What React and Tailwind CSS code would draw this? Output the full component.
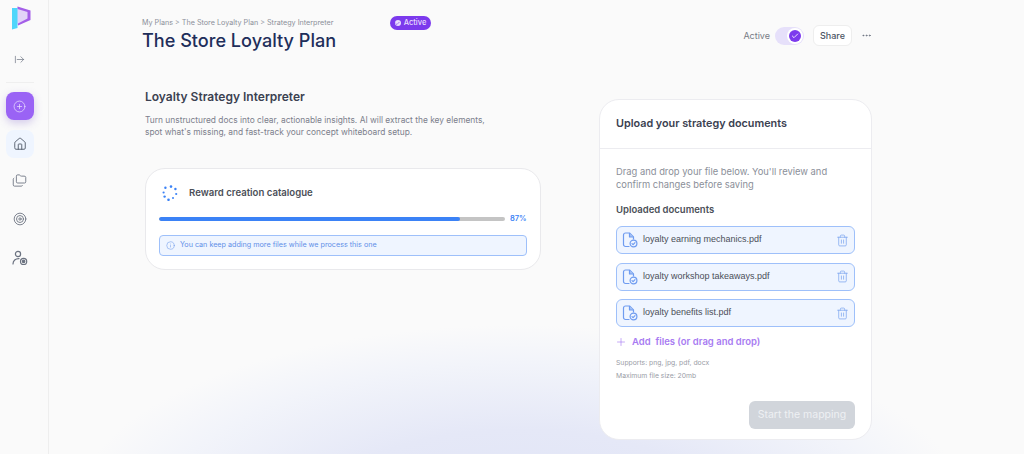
import React from "react";
import { ArrowRightFromLine, CirclePlus, House, Folders, Target, Check, Ellipsis, Info, Plus, Trash2 } from "lucide-react";

const files = ["loyalty earning mechanics.pdf", "loyalty workshop takeaways.pdf", "loyalty benefits list.pdf"];

function Logo() {
  return (
    <svg width="20" height="24" viewBox="0 0 20 24" fill="none">
      <path d="M5 1.5 L18 5 V13.5 L5 19 Z" fill="#e2d3f8" />
      <path d="M5.5 0.5 L18.5 4.5 V14 L6 19.5 V17.5 L15.5 12.5 V6 L5.5 3 Z" fill="#a45ee8" />
      <path d="M0 2 H5.5 V22 L0 23.5 Z" fill="#4fd6fb" />
    </svg>
  );
}

function UserTarget() {
  return (
    <svg width="16" height="16" viewBox="0 0 16 16" fill="none" stroke="#6b7280" strokeWidth="1.2">
      <circle cx="6" cy="4" r="2.6" />
      <path d="M1 14 C1 10.5 3.5 8.5 7 8.6" strokeLinecap="round" />
      <circle cx="11.6" cy="11.4" r="3.1" />
      <circle cx="11.6" cy="11.4" r="1.2" fill="#6b7280" />
    </svg>
  );
}

function FileIcon() {
  return (
    <svg width="16" height="16" viewBox="0 0 16 16" fill="none" stroke="#6f9cf0" strokeWidth="1.2" className="shrink-0">
      <path d="M7 14.5 H3.5 C2.4 14.5 1.5 13.6 1.5 12.5 V3 C1.5 1.9 2.4 1 3.5 1 H7.5 L11.5 5 V7" strokeLinecap="round" strokeLinejoin="round" />
      <path d="M7.5 1 V5 H11.5" fill="#a9c4f5" strokeLinejoin="round" />
      <circle cx="11.5" cy="11.5" r="3.4" />
      <path d="M10 11.6 L11.1 12.7 L13 10.6" strokeLinecap="round" strokeLinejoin="round" />
    </svg>
  );
}

function Spinner() {
  const dots = [[9, 1.6, 1.3], [13.4, 4, 1.2], [14.2, 9, 1.1], [11, 13, 1], [6.5, 14.8, 1.3], [2.6, 11.6, 1.2], [1.6, 7.5, 1.1], [3.4, 2.8, 1.2]];
  return (
    <svg width="16" height="16" viewBox="0 0 16 16" className="shrink-0">
      {dots.map(([cx, cy, r]) => (
        <circle key={cx} cx={cx} cy={cy} r={r} fill="#3b82f6" />
      ))}
    </svg>
  );
}

export default function App() {
  return (
    <div className="flex h-[454px] w-[1024px] overflow-hidden bg-[#fafafa] font-['Inter',sans-serif] text-[#374151]">
      {/* sidebar */}
      <aside className="flex w-[49px] shrink-0 flex-col items-center border-r border-[#eeeeee] pt-[6px] pr-[9px]">
        <div className="ml-[5px]"><Logo /></div>
        <ArrowRightFromLine size={11} strokeWidth={1.5} className="mt-[24px] text-[#6b7280]" />
        <div className="mt-[17px] h-px w-7 bg-[#efefef]" />
        <button className="mt-[9px] flex h-7 w-7 items-center justify-center rounded-lg bg-[#9a63f5] shadow-[0_3px_8px_rgba(120,90,200,0.3)]">
          <CirclePlus size={13} strokeWidth={1.3} className="text-[#ece3fd]" />
        </button>
        <button className="mt-[10px] flex h-7 w-7 items-center justify-center rounded-lg bg-[#eff5ff]">
          <House size={14} strokeWidth={1.5} className="text-[#4b5563]" />
        </button>
        <Folders size={15} strokeWidth={1.4} className="mt-[15px] text-[#6b7280]" />
        <Target size={14} strokeWidth={1.5} className="mt-[24px] text-[#6b7280]" />
        <div className="mt-[24px]"><UserTarget /></div>
      </aside>

      {/* main */}
      <main className="flex-1 bg-[radial-gradient(ellipse_450px_190px_at_471px_515px,#e0e4f6_0%,#e5e8f7_45%,#f2f4fa_80%,#fafafa_100%)] pl-[93px]">
        <header className="flex h-[62px] w-[731px] items-start justify-between pt-[17px]">
          <div>
            <div className="flex items-start">
              <div className="w-[248px] text-[7.2px] leading-[11px] text-[#8b8f99]">My Plans &gt; The Store Loyalty Plan &gt; Strategy Interpreter</div>
              <div className="-mt-[1px] flex h-[14px] w-[41px] items-center justify-center gap-[3px] rounded-full bg-[#7c3aed] text-[7.5px] font-medium text-[#e9defc]">
                <span className="flex h-[6px] w-[6px] items-center justify-center rounded-full bg-[#e9defc]">
                  <Check size={5} strokeWidth={3} className="text-[#7c3aed]" />
                </span>
                Active
              </div>
            </div>
            <h1 className="-mt-[2px] text-[18.1px] leading-[25px] font-medium text-[#1f2e5a]">The Store Loyalty Plan</h1>
          </div>
          <div className="mt-[7px] flex h-[23px] items-center">
            <span className="text-[9px] text-[#777b85]">Active</span>
            <div className="ml-[5px] flex h-[18px] w-[29px] items-center justify-end rounded-full bg-[#e6e0fa] pr-[3px]">
              <span className="flex h-[12px] w-[12px] items-center justify-center rounded-full bg-[#7c3aed] ring-2 ring-white">
                <Check size={8} strokeWidth={2.5} className="text-white" />
              </span>
            </div>
            <button className="ml-[9px] flex h-[21px] w-[39px] items-center justify-center rounded-md border border-[#eeeeee] bg-white text-[9px] font-medium text-[#4b5563]">Share</button>
            <Ellipsis size={11} className="mr-[1.5px] ml-[8.5px] text-[#6b7280]" />
          </div>
        </header>

        <div className="flex items-start">
          {/* left column */}
          <section className="ml-[3px] w-[396px] pt-[27px]">
            <h2 className="text-[12px] leading-4 font-semibold text-[#3b4151]">Loyalty Strategy Interpreter</h2>
            <p className="mt-[9px] text-[8.4px] leading-[12px] text-[#7c808c]">
              Turn unstructured docs into clear, actionable insights. AI will extract the key elements,<br />
              spot what's missing, and fast-track your concept whiteboard setup.
            </p>
            <div className="mt-[30px] h-[102px] rounded-[20px] border border-[#e9e9ec] bg-white px-[13px] pt-4">
              <div className="flex items-center gap-[11px] pl-[3px]">
                <Spinner />
                <span className="text-[9.6px] font-semibold text-[#4b4f58]">Reward creation catalogue</span>
              </div>
              <div className="mt-[12px] flex items-center">
                <div className="h-1 w-[346px] overflow-hidden rounded-full bg-[#c4c4c4]">
                  <div className="h-full w-[87%] rounded-full bg-[#3b82f6]" />
                </div>
                <span className="ml-[5px] text-[7.5px] font-semibold text-[#3b82f6]">87%</span>
              </div>
              <div className="mt-[11px] flex h-[21px] items-center gap-[5px] rounded-[4px] border border-[#9ec0fa] bg-[#eff5ff] pl-[6px] text-[7.2px] text-[#5f8fe8]">
                <Info size={9} strokeWidth={1.3} />
                You can keep adding more files while we process this one
              </div>
            </div>
          </section>

          {/* upload card */}
          <section className="mt-[37px] ml-[58px] h-[341px] w-[273px] rounded-[20px] border border-[#ececf0] bg-white">
            <h2 className="flex h-[48px] items-center pl-[16px] text-[10.8px] font-semibold text-[#3b4151]">Upload your strategy documents</h2>
            <div className="border-t border-[#ececf0] px-4 pt-[16px]">
              <p className="text-[9.4px] leading-[13px] text-[#8b8f99]">Drag and drop your file below. You'll review and confirm changes before saving</p>
              <h3 className="mt-[13px] text-[9.5px] leading-[12px] font-semibold text-[#4b4f58]">Uploaded documents</h3>
              <ul className="mt-[10px] flex flex-col gap-[8.5px]">
                {files.map((f) => (
                  <li key={f} className="flex h-[28px] items-center rounded-md border-[1.5px] border-[#9ec0fa] bg-[#eff5ff] pr-[4px] pl-[5px] font-['Liberation_Sans',sans-serif] text-[9px] text-[#4b4f58]">
                    <FileIcon />
                    <span className="ml-[5px] flex-1">{f}</span>
                    <Trash2 size={13} strokeWidth={1.4} className="mr-[1px] text-[#7ea6ef]" />
                  </li>
                ))}
              </ul>
              <div className="mt-[8px] -ml-[1px] flex items-center gap-[5px] text-[9.5px] font-semibold text-[#a87bf2]">
                <Plus size={12} strokeWidth={1.3} />
                <span>Add&nbsp; files (or drag and drop)</span>
              </div>
              <p className="mt-[7px] text-[6.8px] leading-[13px] text-[#9a9da6]">Supports: png, jpg, pdf, docx<br />Maximum file size: 20mb</p>
              <div className="mt-[19px] flex justify-end">
                <button className="h-7 w-[106px] rounded-md bg-[#d1d5db] text-[10.5px] text-[#eef0f3]">Start the mapping</button>
              </div>
            </div>
          </section>
        </div>
      </main>
    </div>
  );
}
